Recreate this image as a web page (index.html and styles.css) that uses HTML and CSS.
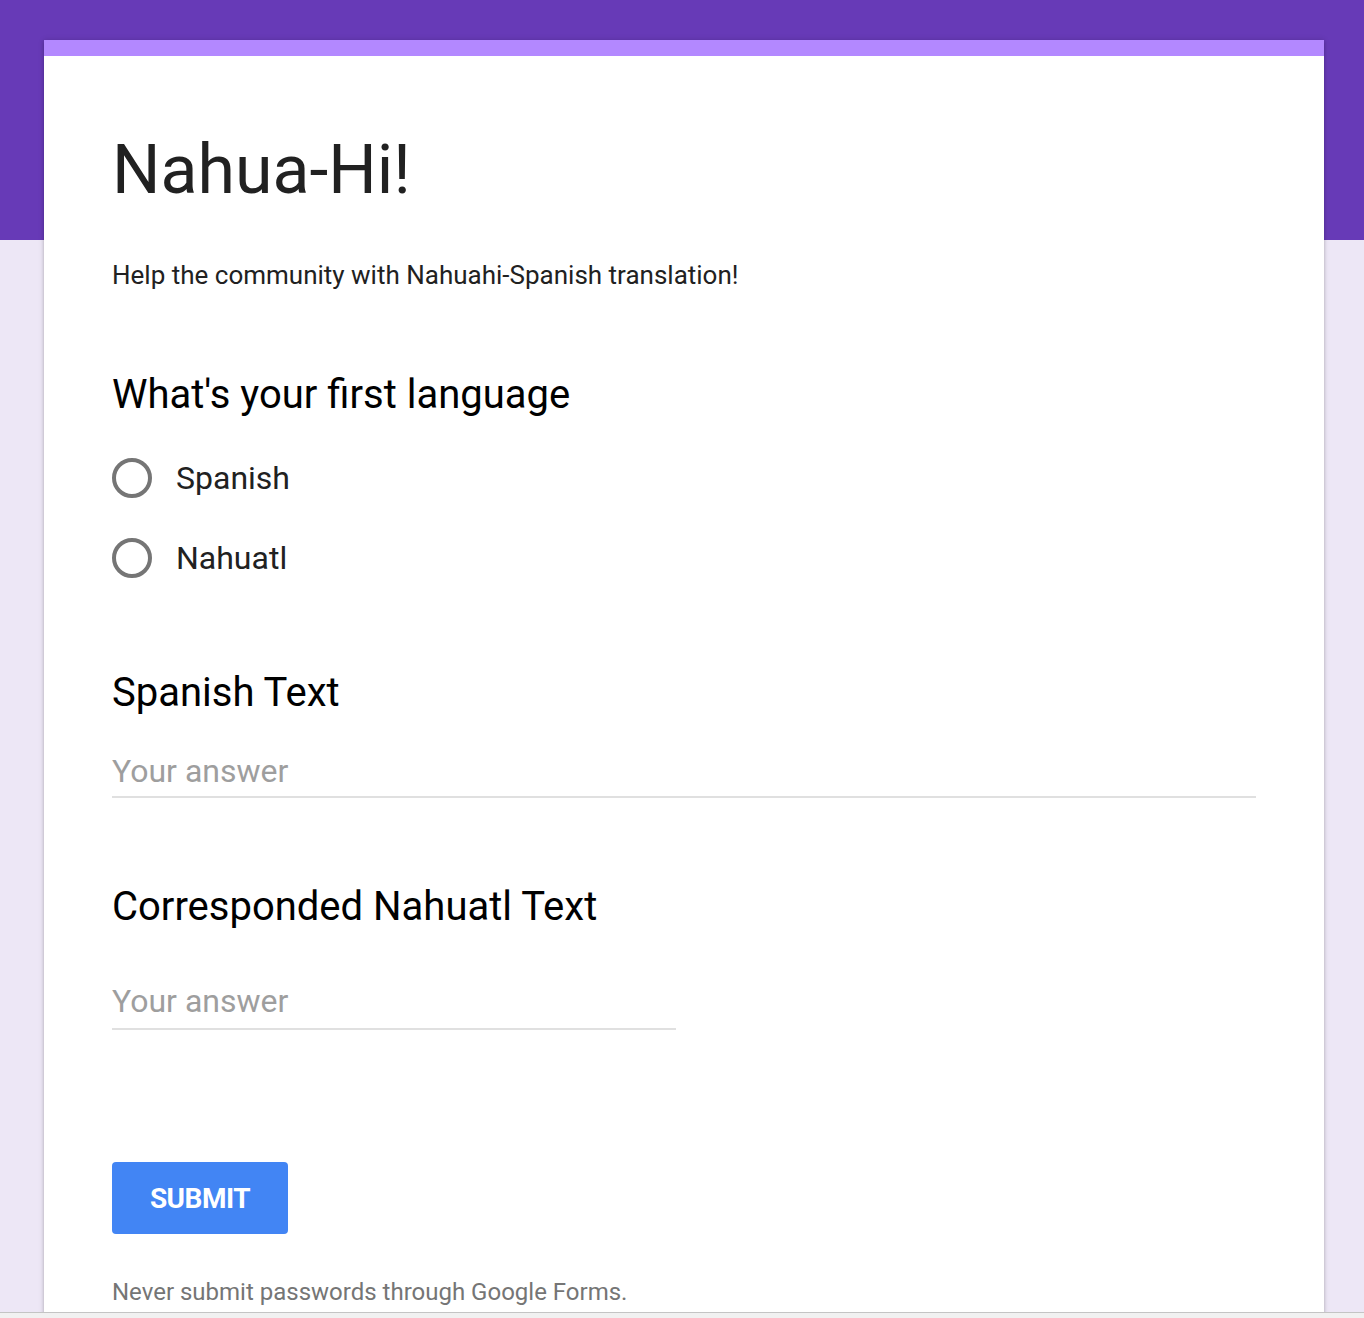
FILE: index.html
```html
<!DOCTYPE html>
<html>
<head>
<meta charset="utf-8">
<link rel="stylesheet" href="styles.css">
</head>
<body>
<div class="page">
  <div class="card">
    <div class="accent"></div>
    <div class="content">
      <h1 class="title">Nahua-Hi!</h1>
      <p class="desc">Help the community with Nahuahi-Spanish translation!</p>

      <div class="question q1">
        <div class="qtitle">What's your first language</div>
        <div class="options">
          <div class="option"><span class="radio"></span><span class="olabel">Spanish</span></div>
          <div class="option"><span class="radio"></span><span class="olabel">Nahuatl</span></div>
        </div>
      </div>

      <div class="question q2">
        <div class="qtitle">Spanish Text</div>
        <div class="answer long">Your answer</div>
      </div>

      <div class="question q3">
        <div class="qtitle">Corresponded Nahuatl Text</div>
        <div class="answer short">Your answer</div>
      </div>

      <div class="submit">SUBMIT</div>
      <p class="footer">Never submit passwords through Google Forms.</p>
    </div>
  </div>
</div>
<div class="statusbar"></div>
</body>
</html>
```

FILE: styles.css
```css
html, body {
  margin: 0;
  padding: 0;
}
body {
  height: 1318px;
  overflow: hidden;
  background: linear-gradient(#673ab7 0, #673ab7 240px, #ede7f6 240px);
  font-family: Roboto, "Noto Sans", sans-serif;
}
.page {
  padding: 40px 0 0 44px;
  display: flex;
}
.card {
  width: 1280px;
  background: #fff;
  box-shadow: 0 2px 3px rgba(0,0,0,0.18), 0 0 6px rgba(0,0,0,0.14);
  min-height: 1300px;
}
.accent {
  height: 16px;
  background: #b388ff;
}
.content {
  padding: 74px 68px 0 68px;
}
.title {
  margin: 0;
  font-size: 68px;
  line-height: 80px;
  font-weight: 400;
  color: #212121;
}
.desc {
  margin: 49px 0 0 0;
  font-size: 26px;
  line-height: 32px;
  color: #212121;
}
.qtitle {
  font-size: 40px;
  line-height: 48px;
  color: #000;
}
.q1 { margin-top: 80px; }
.options { margin-top: 19px; }
.option {
  height: 80px;
  display: flex;
  align-items: center;
}
.radio {
  width: 40px;
  height: 40px;
  box-sizing: border-box;
  border: 4px solid #757575;
  border-radius: 50%;
  flex: none;
}
.olabel {
  margin-left: 24px;
  font-size: 32px;
  color: #212121;
}
.q2 { margin-top: 71px; }
.answer {
  font-size: 32px;
  line-height: 40px;
  color: #9e9e9e;
  border-bottom: 2px solid #e0e0e0;
}
.answer.long {
  margin-top: 34px;
  padding-bottom: 5px;
}
.q3 { margin-top: 85px; }
.answer.short {
  margin-top: 50px;
  padding-bottom: 7px;
  width: 564px;
}
.submit {
  margin-top: 132px;
  width: 176px;
  height: 72px;
  background: #4285f4;
  border-radius: 4px;
  color: #fff;
  font-size: 28px;
  font-weight: 700;
  display: flex;
  align-items: center;
  justify-content: center;
  letter-spacing: -0.5px;
}
.footer {
  margin: 42px 0 0 0;
  font-size: 24px;
  line-height: 32px;
  color: #757575;
}
.statusbar {
  position: fixed;
  left: 0;
  right: 0;
  bottom: 0;
  height: 5px;
  border-top: 1px solid #c4c4c4;
  background: #f1f1f1;
}
```
